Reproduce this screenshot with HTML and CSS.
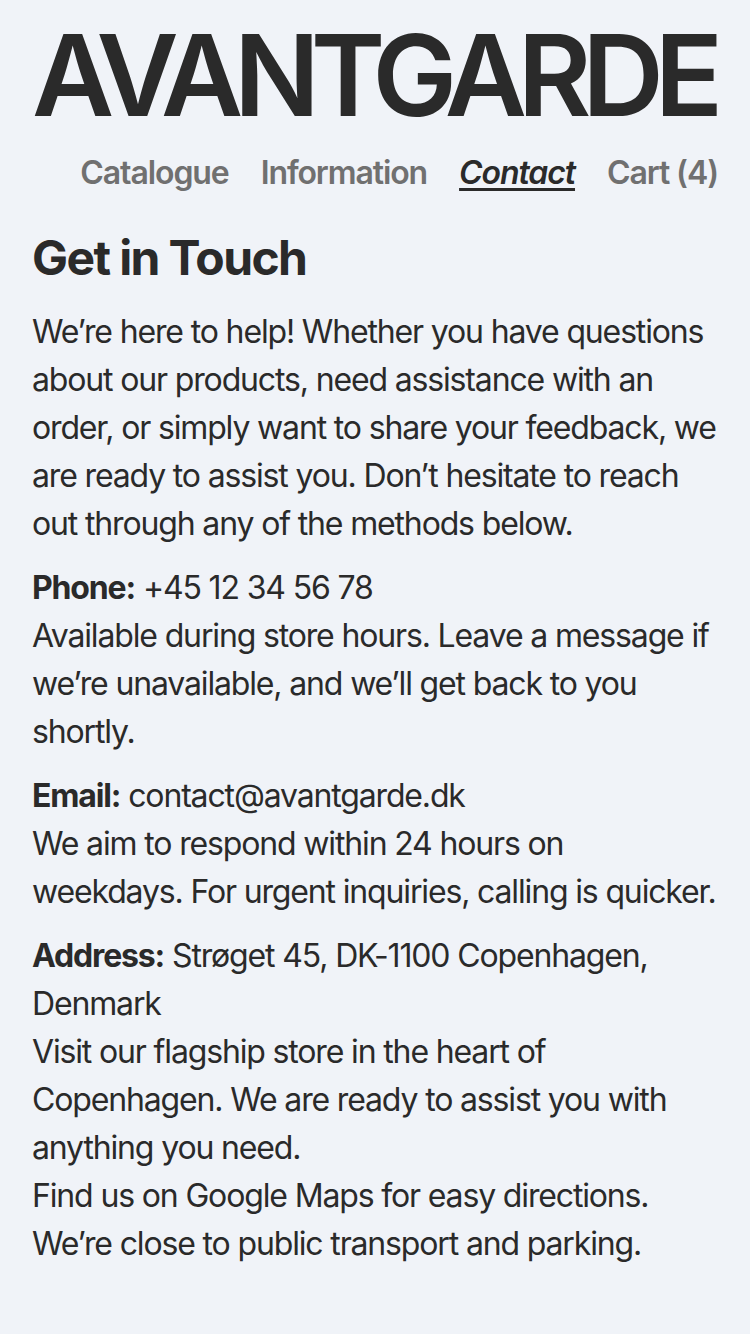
FILE: index.html
```html
<!DOCTYPE html>
<html lang="en">
<head>
<meta charset="utf-8">
<title>Contact — Avantgarde</title>
<link rel="stylesheet" href="styles.css">
</head>
<body>
<header class="site-header">
  <h1 class="logo">AVANTGARDE</h1>
  <nav class="nav">
    <a class="nav-link" href="#">Catalogue</a>
    <a class="nav-link" href="#">Information</a>
    <a class="nav-link active" href="#">Contact</a>
    <a class="nav-link" href="#">Cart (4)</a>
  </nav>
</header>
<main class="content">
  <h2 class="title">Get in Touch</h2>
  <p class="para">We’re here to help! Whether you have questions about our products, need assistance with an order, or simply want to share your feedback, we are ready to assist you. Don’t hesitate to reach out through any of the methods below.</p>
  <p class="para"><strong>Phone:</strong> +45 12 34 56 78<br>Available during store hours. Leave a message if we’re unavailable, and we’ll get back to you shortly.</p>
  <p class="para"><strong>Email:</strong> contact@avantgarde.dk<br>We aim to respond within 24 hours on weekdays. For urgent inquiries, calling is quicker.</p>
  <p class="para"><strong>Address:</strong> Strøget 45, DK-1100 Copenhagen, Denmark<br>Visit our flagship store in the heart of Copenhagen. We are ready to assist you with anything you need.<br>Find us on Google Maps for easy directions. We’re close to public transport and parking.</p>
</main>
</body>
</html>
```
FILE: styles.css
```css
* { box-sizing: border-box; }
html, body { margin: 0; padding: 0; }
body {
  background: #f0f3f8;
  color: #2a2a2a;
  font-family: Inter, "Noto Sans", sans-serif;
  padding: 13px 32px 32px;
}
.site-header {
  display: flex;
  flex-direction: column;
}
.logo {
  margin: 0;
  font-size: 113px;
  font-weight: 600;
  line-height: 1.1;
  letter-spacing: -9.2px;
  white-space: nowrap;
}
.nav {
  display: flex;
  justify-content: flex-end;
  gap: 32px;
  margin-top: 16px;
}
.nav-link {
  font-size: 32px;
  font-weight: 600;
  color: #707070;
  text-decoration: none;
  letter-spacing: -1.1px;
}
.nav-link.active {
  color: #2a2a2a;
  font-style: italic;
  text-decoration: underline;
  text-decoration-thickness: 3px;
  text-underline-offset: 4px;
}
.content {
  margin-top: 32px;
}
.title {
  margin: 0 0 17px;
  font-size: 48px;
  font-weight: 700;
  line-height: 1.4;
  letter-spacing: -1.6px;
}
.para {
  margin: 0 0 16px;
  font-size: 32px;
  line-height: 48px;
  letter-spacing: -1.15px;
}
.para strong { font-weight: 700; }
```
